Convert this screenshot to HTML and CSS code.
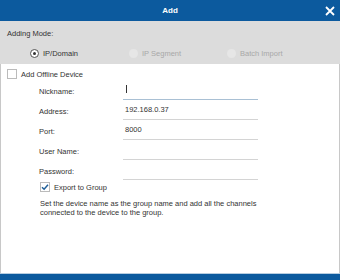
FILE: index.html
```html
<!DOCTYPE html>
<html lang="en">
<head>
    <meta charset="UTF-8">
    <title>Add</title>
    <link rel="stylesheet" href="styles.css">
</head>
<body>
    <div class="dialog">
        <div class="titlebar">
            <span class="title">Add</span>
            <svg class="close" width="10" height="10" viewBox="0 0 10 10">
                <path d="M1 1 L9 9 M9 1 L1 9" stroke="#fff" stroke-width="1.8" fill="none"/>
            </svg>
        </div>

        <div class="mode">
            <div class="mode-label">Adding Mode:</div>
            <div class="mode-options">
                <label class="radio checked"><span class="dot"></span>IP/Domain</label>
                <label class="radio disabled"><span class="dot"></span>IP Segment</label>
                <label class="radio disabled"><span class="dot"></span>Batch Import</label>
            </div>
        </div>

        <div class="content">
            <label class="check offline"><span class="box"></span>Add Offline Device</label>

            <div class="fields">
                <span class="field-label">Nickname:</span>
                <span class="field-input active"><span class="caret"></span></span>

                <span class="field-label">Address:</span>
                <span class="field-input">192.168.0.37</span>

                <span class="field-label">Port:</span>
                <span class="field-input">8000</span>

                <span class="field-label">User Name:</span>
                <span class="field-input"></span>

                <span class="field-label">Password:</span>
                <span class="field-input"></span>
            </div>

            <label class="check export">
                <span class="box">
                    <svg width="8" height="8" viewBox="0 0 8 8">
                        <path d="M1 4.2 L3.1 6.2 L7 1.8" stroke="#1f5e98" stroke-width="1.5" fill="none"/>
                    </svg>
                </span>Export to Group
            </label>
            <p class="hint">Set the device name as the group name and add all the channels connected to the device to the group.</p>
        </div>

        <div class="footer"></div>
    </div>
</body>
</html>
```

FILE: styles.css
```css
body { margin: 0; font-family: "Liberation Sans", Arial, sans-serif; font-size: 7.5px; color: #333; }
.dialog { width: 340px; height: 280px; display: flex; flex-direction: column; background: #fff; }

/* title bar */
.titlebar {
    height: 21px;
    background-color: #0c5a9e;
    display: flex;
    align-items: center;
    justify-content: center;
    position: relative;
}
.title { color: #fff; font-weight: bold; font-size: 8px; }
.close { position: absolute; right: 5px; top: 6px; }

/* adding mode */
.mode { height: 43px; background-color: #dcdcdc; padding: 0 7px; box-sizing: border-box; }
.mode-label { padding-top: 8px; height: 18px; }
.mode-options { display: flex; padding-left: 23px; margin-top: 2px; }
.radio { display: flex; align-items: center; gap: 4px; }
.radio:nth-child(1) { width: 99px; }
.radio:nth-child(2) { width: 98px; }
.radio .dot {
    width: 9px;
    height: 9px;
    border-radius: 50%;
    box-sizing: border-box;
    display: inline-flex;
    align-items: center;
    justify-content: center;
}
.radio.checked .dot { border: 1px solid #555; background: #fff; }
.radio.checked .dot::after { content: ""; width: 3px; height: 3px; border-radius: 50%; background: #333; }
.radio.disabled { color: #a8a8a8; }
.radio.disabled .dot { background: #e6e6e6; }

/* content */
.content {
    flex: 1;
    border-left: 1px solid #c8c8c8;
    border-right: 1px solid #c8c8c8;
    padding: 5px 6px 0;
}
.check { display: flex; align-items: center; gap: 4px; }
.check .box {
    width: 10px;
    height: 10px;
    border: 1px solid #bbb;
    box-sizing: border-box;
    background: #fff;
    display: inline-flex;
    align-items: center;
    justify-content: center;
}
.fields {
    display: grid;
    grid-template-columns: 84px 135px;
    grid-auto-rows: 20px;
    margin: 4px 0 0 32px;
}
.field-label { display: flex; align-items: center; padding-bottom: 4px; }
.field-input {
    display: flex;
    align-items: center;
    padding: 0 2px 4px;
    border-bottom: 1px solid #d4d4d4;
    box-sizing: border-box;
    height: 17px;
    color: #333;
}
.field-input.active { border-bottom-color: #a9c0d4; }
.caret { width: 1px; height: 8px; background: #333; margin-left: 1px; }
.check.export { margin: -1px 0 0 33px; }
.hint { margin: 7px 0 0 33px; line-height: 9px; width: 225px; }

.footer { height: 6px; background-color: #0c5a9e; border-top: 1px solid #b7cde0; }
```
